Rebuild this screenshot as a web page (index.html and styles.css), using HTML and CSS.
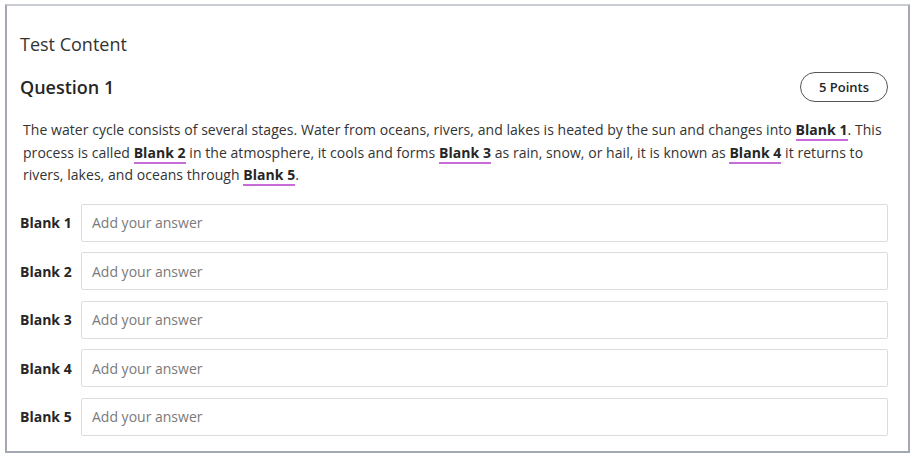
FILE: index.html
```html
<!DOCTYPE html>
<html lang="en">
<head>
<meta charset="utf-8">
<title>Test Content</title>
<link rel="stylesheet" href="styles.css">
</head>
<body>
<main class="frame">
  <h1 class="title">Test Content</h1>
  <div class="qhead">
    <h2 class="qtitle">Question 1</h2>
    <span class="points">5 Points</span>
  </div>
  <p class="prompt">The water cycle consists of several stages. Water from oceans, rivers, and lakes is heated by the sun and changes into <span class="blank">Blank 1</span>. This process is called <span class="blank">Blank 2</span> in the atmosphere, it cools and forms <span class="blank">Blank 3</span> as rain, snow, or hail, it is known as <span class="blank">Blank 4</span> it returns to rivers, lakes, and oceans through <span class="blank">Blank 5</span>.</p>
  <div class="answers">
    <label class="row"><span class="lbl">Blank 1</span><input class="field" type="text" placeholder="Add your answer"></label>
    <label class="row"><span class="lbl">Blank 2</span><input class="field" type="text" placeholder="Add your answer"></label>
    <label class="row"><span class="lbl">Blank 3</span><input class="field" type="text" placeholder="Add your answer"></label>
    <label class="row"><span class="lbl">Blank 4</span><input class="field" type="text" placeholder="Add your answer"></label>
    <label class="row"><span class="lbl">Blank 5</span><input class="field" type="text" placeholder="Add your answer"></label>
  </div>
</main>
</body>
</html>
```
FILE: styles.css
```css
* { box-sizing: border-box; }
html, body { margin: 0; padding: 0; background: #fff; }
body {
  font-family: "Open Sans", "Noto Sans", sans-serif;
  color: #333;
  padding: 4px 9px 0 5px;
}
.frame {
  width: 905px;
  height: 449px;
  border: 2px solid #a3a8b2;
  border-top-color: #c9ccd2;
  padding: 26px 20px 15px 13px;
  display: flex;
  flex-direction: column;
}
.title {
  margin: 0;
  font-size: 18px;
  line-height: 24px;
  font-weight: 400;
  color: #333;
}
.qhead {
  margin-top: 16px;
  height: 30px;
  display: flex;
  align-items: center;
  justify-content: space-between;
}
.qtitle {
  margin: 0;
  font-size: 18px;
  line-height: 24px;
  font-weight: 600;
  color: #262626;
}
.points {
  width: 88px;
  height: 30px;
  border: 1px solid #555;
  border-radius: 15px;
  display: flex;
  align-items: center;
  justify-content: center;
  font-size: 13px;
  font-weight: 600;
  color: #262626;
}
.prompt {
  margin: 17px 0 0;
  padding-left: 3px;
  font-size: 14px;
  line-height: 22.5px;
  letter-spacing: 0.05px;
  color: #333;
}
.blank {
  font-weight: 700;
  color: #262626;
  border-bottom: 2px solid #c86dd8;
}
.answers {
  margin-top: 17px;
  display: flex;
  flex-direction: column;
  gap: 10.5px;
}
.row {
  display: flex;
  align-items: center;
  gap: 9px;
}
.lbl {
  width: 52px;
  font-size: 14px;
  font-weight: 700;
  color: #262626;
  white-space: nowrap;
}
.field {
  flex: 1;
  height: 38px;
  border: 1px solid #dcdcdc;
  border-radius: 2px;
  padding: 0 10px;
  font-family: inherit;
  font-size: 14px;
  color: #333;
  outline: none;
}
.field::placeholder { color: #7a7a7a; }
```
